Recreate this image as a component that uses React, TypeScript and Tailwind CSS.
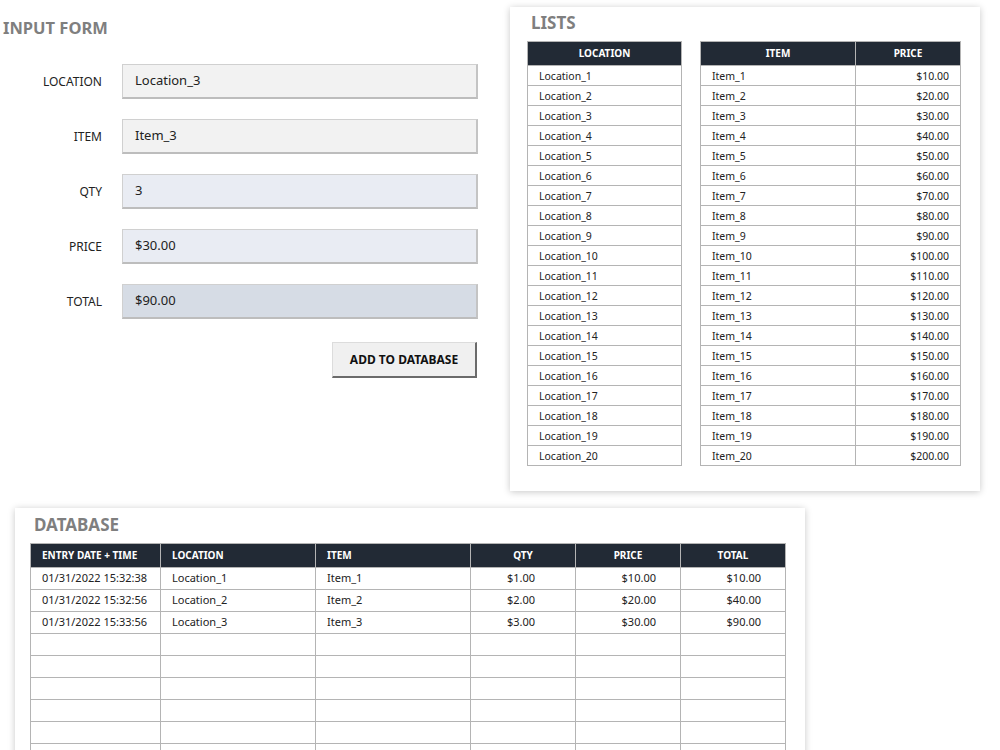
import React from "react";

const font = { fontFamily: '"Noto Sans", "Liberation Sans", sans-serif' };

const fields = [
  { label: "LOCATION", value: "Location_3", bg: "bg-[#f2f2f2]" },
  { label: "ITEM", value: "Item_3", bg: "bg-[#f2f2f2]" },
  { label: "QTY", value: "3", bg: "bg-[#e9ecf3]" },
  { label: "PRICE", value: "$30.00", bg: "bg-[#e9ecf3]" },
  { label: "TOTAL", value: "$90.00", bg: "bg-[#d6dce5]" },
];

const nums = Array.from({ length: 20 }, (_, i) => i + 1);

const dbRows = [
  ["01/31/2022 15:32:38", "Location_1", "Item_1", "$1.00", "$10.00", "$10.00"],
  ["01/31/2022 15:32:56", "Location_2", "Item_2", "$2.00", "$20.00", "$40.00"],
  ["01/31/2022 15:33:56", "Location_3", "Item_3", "$3.00", "$30.00", "$90.00"],
  ...Array.from({ length: 6 }, () => ["", "", "", "", "", ""]),
];

export default function App() {
  return (
    <div className="w-[1000px] h-[750px] overflow-hidden bg-white text-[#222]" style={font}>
      <div className="flex">
        {/* INPUT FORM */}
        <div className="w-[510px] shrink-0 pl-[3px] pt-[16px]">
          <div className="text-[16.5px] leading-[24px] font-bold text-[#7f7f7f]">INPUT FORM</div>
          <div className="mt-[24px] flex flex-col gap-[20px]">
            {fields.map((f) => (
              <div key={f.label} className="flex items-center">
                <div className="w-[99px] text-right text-[12px] text-[#222]">{f.label}</div>
                <div
                  className={`ml-[20px] w-[356px] h-[35px] flex items-center pl-[12px] text-[13px] ${f.bg} border border-[#d0d0d0] border-b-2 border-r-2 border-b-[#bdbdbd] border-r-[#c4c4c4]`}
                >
                  {f.value}
                </div>
              </div>
            ))}
          </div>
          <div className="flex justify-end w-[474px] mt-[23px]">
            <div className="w-[145px] h-[36px] flex items-center justify-center bg-[#f0f0f0] border border-[#dcdcdc] border-b-2 border-r-2 border-b-[#6b6b6b] border-r-[#6b6b6b] text-[12px] font-bold text-[#111]">
              ADD TO DATABASE
            </div>
          </div>
        </div>

        {/* LISTS */}
        <div className="mt-[7px] w-[470px] h-[484px] shrink-0 bg-white shadow-[0_1px_7px_rgba(0,0,0,0.22)] pl-[17px] pt-[4px]">
          <div className="pl-[4px] text-[17px] leading-[24px] font-bold text-[#7f7f7f]">LISTS</div>
          <div className="mt-[6px] flex gap-[18px] items-start">
            <table className="border-collapse w-[155px] text-[10.5px] table-fixed">
              <thead>
                <tr className="h-[24px] bg-[#222a35] text-white">
                  <th className="border border-[#b4b4b4] text-[10px] font-bold text-center">LOCATION</th>
                </tr>
              </thead>
              <tbody>
                {nums.map((n) => (
                  <tr key={n} className="h-[20px]">
                    <td className="border border-[#b4b4b4] pl-[11px] p-0 leading-[18px]">Location_{n}</td>
                  </tr>
                ))}
              </tbody>
            </table>
            <table className="border-collapse w-[260px] text-[10.5px] table-fixed">
              <colgroup>
                <col className="w-[155px]" />
                <col className="w-[105px]" />
              </colgroup>
              <thead>
                <tr className="h-[24px] bg-[#222a35] text-white">
                  <th className="border border-[#b4b4b4] text-[10px] font-bold text-center">ITEM</th>
                  <th className="border border-[#b4b4b4] text-[10px] font-bold text-center">PRICE</th>
                </tr>
              </thead>
              <tbody>
                {nums.map((n) => (
                  <tr key={n} className="h-[20px]">
                    <td className="border border-[#b4b4b4] pl-[11px] p-0 leading-[18px]">Item_{n}</td>
                    <td className="border border-[#b4b4b4] pr-[11px] p-0 text-right leading-[18px]">${n * 10}.00</td>
                  </tr>
                ))}
              </tbody>
            </table>
          </div>
        </div>
      </div>

      {/* DATABASE */}
      <div className="ml-[15px] mt-[17px] w-[790px] h-[300px] bg-white shadow-[0_1px_7px_rgba(0,0,0,0.22)] pl-[15px] pt-[5px]">
        <div className="pl-[4px] text-[17px] leading-[24px] font-bold text-[#7f7f7f]">DATABASE</div>
        <table className="mt-[6px] border-collapse w-[755px] table-fixed text-[11px]">
          <colgroup>
            <col className="w-[130px]" />
            <col className="w-[155px]" />
            <col className="w-[155px]" />
            <col className="w-[105px]" />
            <col className="w-[105px]" />
            <col className="w-[105px]" />
          </colgroup>
          <thead>
            <tr className="h-[24px] bg-[#222a35] text-white text-[10px] font-bold">
              <th className="border border-[#b4b4b4] text-left pl-[11px]">ENTRY DATE + TIME</th>
              <th className="border border-[#b4b4b4] text-left pl-[11px]">LOCATION</th>
              <th className="border border-[#b4b4b4] text-left pl-[11px]">ITEM</th>
              <th className="border border-[#b4b4b4] text-center">QTY</th>
              <th className="border border-[#b4b4b4] text-center">PRICE</th>
              <th className="border border-[#b4b4b4] text-center">TOTAL</th>
            </tr>
          </thead>
          <tbody>
            {dbRows.map((r, i) => (
              <tr key={i} className="h-[22px]">
                <td className="border border-[#b4b4b4] pl-[11px]">{r[0]}</td>
                <td className="border border-[#b4b4b4] pl-[11px]">{r[1]}</td>
                <td className="border border-[#b4b4b4] pl-[11px]">{r[2]}</td>
                <td className="border border-[#b4b4b4] text-right pr-[40px]">{r[3]}</td>
                <td className="border border-[#b4b4b4] text-right pr-[24px]">{r[4]}</td>
                <td className="border border-[#b4b4b4] text-right pr-[24px]">{r[5]}</td>
              </tr>
            ))}
          </tbody>
        </table>
      </div>
    </div>
  );
}
